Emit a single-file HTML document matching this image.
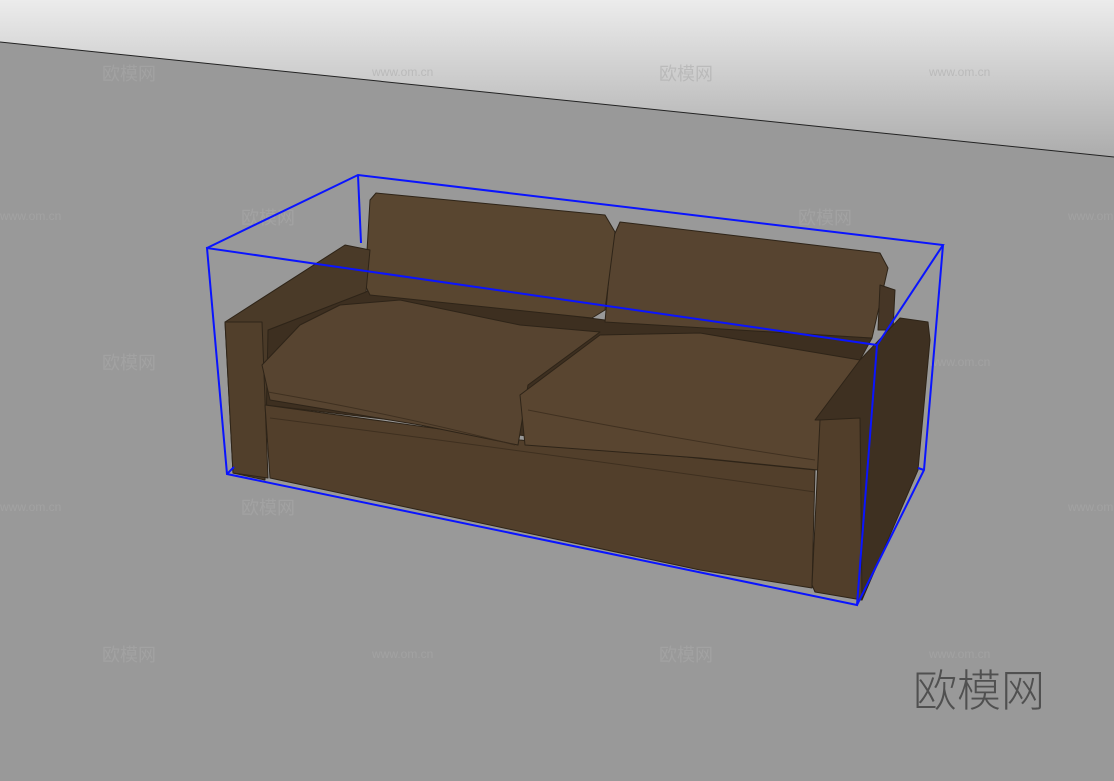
<!DOCTYPE html>
<html><head><meta charset="utf-8"><style>
html,body{margin:0;padding:0;width:1114px;height:781px;overflow:hidden;background:#999}
svg{position:absolute;left:0;top:0}
.wm{font-family:"Liberation Sans","Noto Sans CJK SC",sans-serif;fill:#aaa;opacity:.55}
</style></head><body>
<svg width="1114" height="781" viewBox="0 0 1114 781">
<defs>
<linearGradient id="sky" x1="0" y1="0" x2="0" y2="1">
<stop offset="0" stop-color="#ececec"/><stop offset="1" stop-color="#acacac"/></linearGradient>
</defs>
<rect width="1114" height="781" fill="#999"/>
<polygon points="0,0 1114,0 1114,157 0,42" fill="url(#sky)"/>
<line x1="0" y1="42" x2="1114" y2="157" stroke="#222" stroke-width="1"/>

<g class="wm" font-size="18"><text x="102" y="80">欧模网</text><text x="659" y="80">欧模网</text>
<text x="241" y="224">欧模网</text><text x="798" y="224">欧模网</text>
<text x="102" y="369">欧模网</text><text x="659" y="369">欧模网</text>
<text x="241" y="514">欧模网</text><text x="798" y="514">欧模网</text>
<text x="102" y="661">欧模网</text><text x="659" y="661">欧模网</text></g>
<g class="wm" font-size="12"><text x="372" y="76">www.om.cn</text><text x="929" y="76">www.om.cn</text>
<text x="0" y="220">www.om.cn</text><text x="512" y="220">www.om.cn</text><text x="1068" y="220">www.om.cn</text>
<text x="372" y="366">www.om.cn</text><text x="929" y="366">www.om.cn</text>
<text x="0" y="511">www.om.cn</text><text x="512" y="511">www.om.cn</text><text x="1068" y="511">www.om.cn</text>
<text x="372" y="658">www.om.cn</text><text x="929" y="658">www.om.cn</text></g>

<g stroke="#2e2418" stroke-width="1" stroke-linejoin="round">
<!-- inner fill -->
<polygon points="268,330 370,290 605,320 872,338 860,360 820,420 815,470 265,405" fill="#3d2f20"/>
<polygon points="620,222 880,253 888,268 872,338 605,322 612,240" fill="#574430"/>
<polygon points="880,285 895,290 893,330 878,330" fill="#463626"/>
<polygon points="376,193 605,215 615,232 605,310 592,318 370,295 365,285 370,200" fill="#594630"/>
<polygon points="225,322 345,245 370,250 366,292 268,330 265,480 233,473" fill="#4a3a28"/>
<polygon points="225,322 262,322 268,478 233,473" fill="#513f2b"/>
<polygon points="265,405 520,440 815,470 812,588 700,570 270,478" fill="#523f2b"/>
<polygon points="262,365 300,325 340,305 400,300 520,325 600,332 528,385 518,445 420,425 270,400" fill="#574430"/>
<polygon points="520,395 600,335 700,333 860,360 838,408 818,470 700,458 525,445" fill="#594530"/>
<polygon points="815,420 860,360 900,318 928,322 930,340 918,470 862,600 855,598 860,420" fill="#3e3021"/>
<polygon points="820,420 860,418 862,600 815,592 812,585" fill="#513e2a"/>
</g>
<g fill="none" stroke="#3a2c1d" stroke-width="1" opacity=".8">
<path d="M268,392 Q400,415 515,445"/><path d="M528,410 Q680,440 815,460"/>
<path d="M270,418 Q520,450 815,492"/>
</g>

<g stroke="#0a14ff" stroke-width="2" fill="none">
<polyline points="207,248 358,175 943,245 877,345 207,248 227,474 857,605 877,345"/>
<polyline points="943,245 924,470 857,605"/>
<line x1="358" y1="175" x2="361" y2="243"/>
<line x1="227" y1="474" x2="234" y2="467"/>
<line x1="918" y1="468" x2="924" y2="470"/>
</g>

<text x="913" y="706" font-family="'Noto Sans CJK SC',sans-serif" font-size="44" font-weight="300" fill="#505050">欧模网</text>
</svg>
</body></html>
